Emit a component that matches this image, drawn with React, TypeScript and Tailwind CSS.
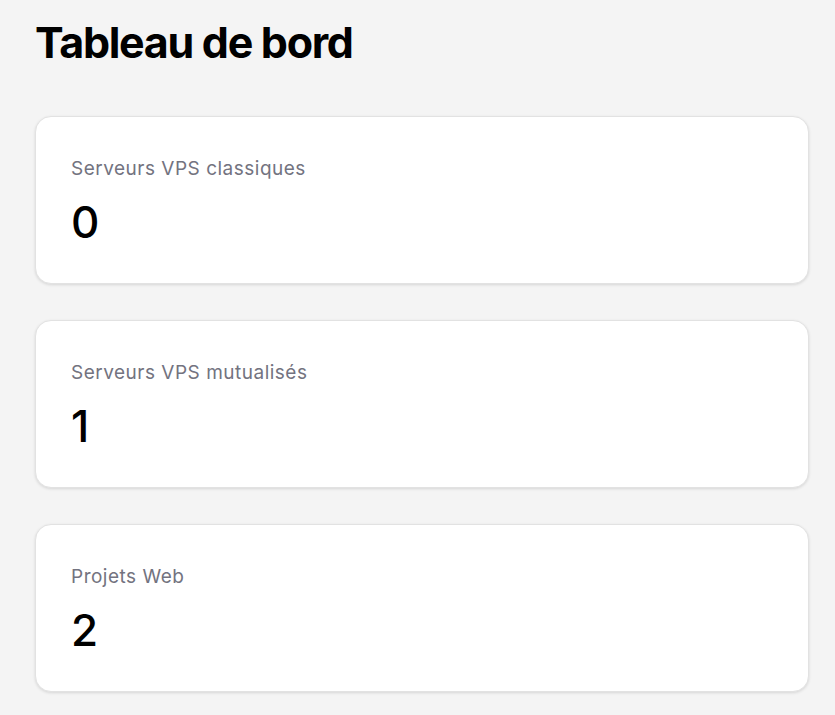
import React from "react";

const items = [
  { label: "Serveurs VPS classiques", value: "0" },
  { label: "Serveurs VPS mutualisés", value: "1" },
  { label: "Projets Web", value: "2" },
];

export default function App() {
  return (
    <div
      className="min-h-[715px] bg-[#f4f4f4] pl-[35px] pr-[26px] pt-[20px] pb-8"
      style={{ fontFamily: "Inter, 'Noto Sans', sans-serif" }}
    >
      <h1 className="text-[43px] font-bold leading-[44px] tracking-[-1.3px] text-black">
        Tableau de bord
      </h1>
      <div className="mt-[52px] flex flex-col gap-[36px]">
        {items.map((it) => (
          <div
            key={it.label}
            className="h-[168px] rounded-2xl border border-[#e2e2e2] bg-white px-[35px] pt-[38px] shadow-[0_1px_3px_rgba(0,0,0,0.12)]"
          >
            <div className="text-[19px] leading-[28px] tracking-[0.5px] text-[#737380]">{it.label}</div>
            <div className="mt-[15px] text-[44px] leading-[48px] font-medium text-black">
              {it.value}
            </div>
          </div>
        ))}
      </div>
    </div>
  );
}
